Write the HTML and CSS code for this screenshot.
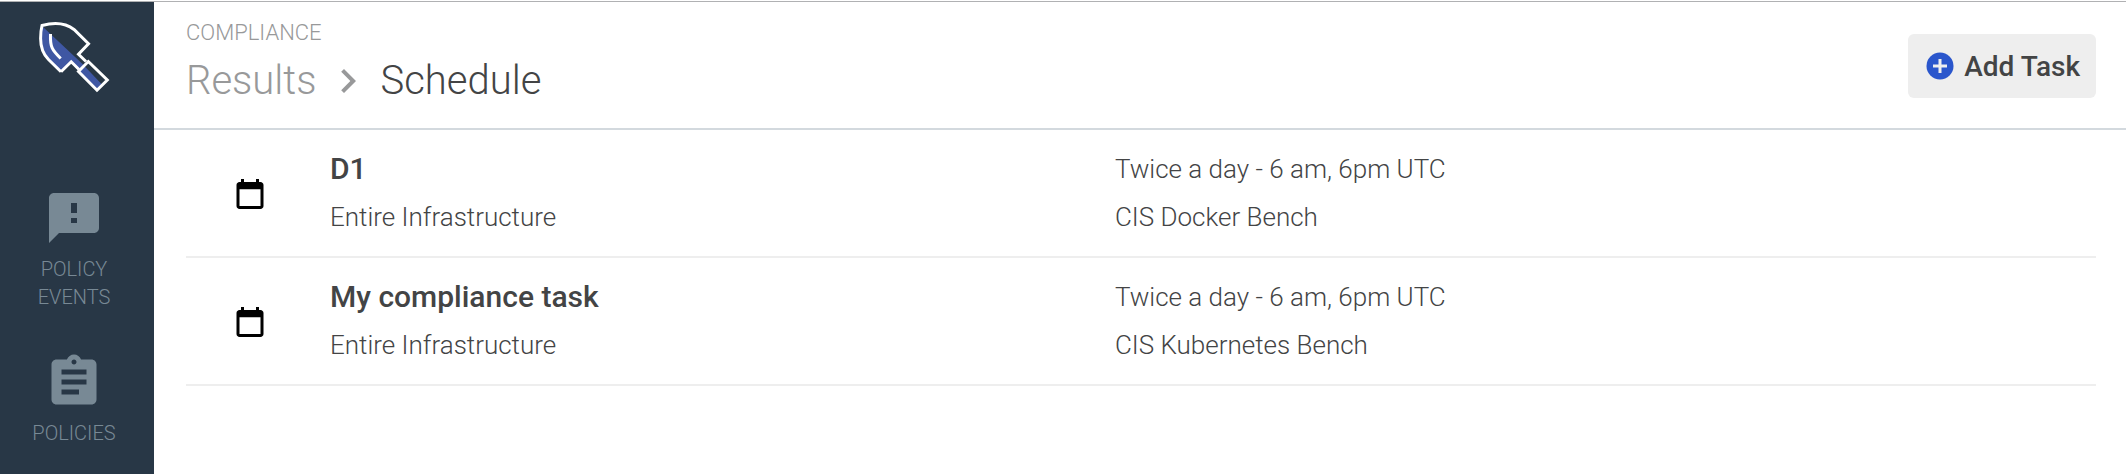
FILE: index.html
```html
<!DOCTYPE html>
<html lang="en">
<head>
<meta charset="utf-8">
<meta name="viewport" content="width=device-width, initial-scale=1">
<title>Schedule</title>
<link rel="stylesheet" href="styles.css">
</head>
<body>
<div class="app">
  <nav class="sidebar" aria-label="Main">
    <a class="logo" href="#" aria-label="Home">
      <svg class="logo-icon" viewBox="0 0 74 74" aria-hidden="true">
        <path class="logo-fill" d="M5 6L45 43.500L64.500 64L60 69L42 51L34 42L24 52L10 38Q3.500 31 3.600 18Z"/>
        <path class="logo-line" d="M24 51.800L11.500 39.500C5.500 33.500 3.600 27 3.600 18.500C3.600 14 4 9.500 5 5.500C17 2.300 28 2.500 37 9.500L51.500 23.700L41.500 34.200L49 41.500M24 51.800L34.200 41.800L42 49.500"/>
        <path class="logo-line" d="M51.300 41.500L70.300 60L60 70.200L41.500 51.500Z"/>
        <path class="logo-line" d="M13.500 14C13 27 15 30 23.700 38.500"/>
      </svg>
    </a>
    <a class="nav-item" href="#">
      <svg class="nav-icon" viewBox="0 0 24 24" aria-hidden="true"><path d="M20 2H4c-1.100 0-2 .9-2 2v18l4-4h14c1.100 0 2-.9 2-2V4c0-1.100-.9-2-2-2zm-6.800 12h-2.400v-2h2.400zm0-4h-2.400V6h2.400z"/></svg>
      <span class="nav-label">POLICY EVENTS</span>
    </a>
    <a class="nav-item" href="#">
      <svg class="nav-icon" viewBox="0 0 24 24" aria-hidden="true"><path d="M19 3h-4.180C14.400 1.840 13.300 1 12 1c-1.300 0-2.400.84-2.820 2H5c-1.100 0-2 .9-2 2v14c0 1.100.9 2 2 2h14c1.100 0 2-.9 2-2V5c0-1.100-.9-2-2-2zm-7 0c.55 0 1 .45 1 1s-.45 1-1 1-1-.45-1-1 .45-1 1-1zm2 14H7v-2h7v2zm3-4H7v-2h10v2zm0-4H7V7h10v2z"/></svg>
      <span class="nav-label">POLICIES</span>
    </a>
  </nav>
  <main class="main">
    <header class="header">
      <div class="heading">
        <div class="section">COMPLIANCE</div>
        <div class="crumbs">
          <a class="crumb-link" href="#">Results</a>
          <svg class="crumb-icon" viewBox="0 0 24 24" aria-hidden="true"><path d="M10 6L8.590 7.410 13.170 12l-4.580 4.590L10 18l6-6z"/></svg>
          <h1 class="crumb-current">Schedule</h1>
        </div>
      </div>
      <button class="add" type="button">
        <svg class="add-icon" viewBox="0 0 28 28" aria-hidden="true"><circle cx="14" cy="14" r="13.500"/><path d="M14 7v14M7 14h14"/></svg>
        Add Task
      </button>
    </header>
    <ul class="tasks">
      <li class="task">
        <svg class="task-icon" viewBox="0 0 24 24" aria-hidden="true"><path d="M19 4h-1V2h-2v2H8V2H6v2H5c-1.100 0-2 .9-2 2v14c0 1.100.9 2 2 2h14c1.100 0 2-.9 2-2V6c0-1.100-.9-2-2-2zm0 16H5V8.800h14z"/></svg>
        <div class="task-col">
          <h2 class="task-name">D1</h2>
          <div class="task-text">Entire Infrastructure</div>
        </div>
        <div class="task-col">
          <div class="task-text">Twice a day - 6 am, 6pm UTC</div>
          <div class="task-text">CIS Docker Bench</div>
        </div>
      </li>
      <li class="task">
        <svg class="task-icon" viewBox="0 0 24 24" aria-hidden="true"><path d="M19 4h-1V2h-2v2H8V2H6v2H5c-1.100 0-2 .9-2 2v14c0 1.100.9 2 2 2h14c1.100 0 2-.9 2-2V6c0-1.100-.9-2-2-2zm0 16H5V8.800h14z"/></svg>
        <div class="task-col">
          <h2 class="task-name">My compliance task</h2>
          <div class="task-text">Entire Infrastructure</div>
        </div>
        <div class="task-col">
          <div class="task-text">Twice a day - 6 am, 6pm UTC</div>
          <div class="task-text">CIS Kubernetes Bench</div>
        </div>
      </li>
    </ul>
  </main>
</div>
</body>
</html>
```

FILE: styles.css
```css
* {
  box-sizing: border-box;
}

body {
  margin: 0;
  padding-top: 1px;
  background: #fff;
  color: #434445;
  font-family: Roboto, "Liberation Sans", sans-serif;
  font-weight: 300;
}

a {
  color: inherit;
  text-decoration: none;
}

h1,
h2 {
  margin: 0;
}

.app {
  display: flex;
  min-height: calc(100vh - 1px);
  border-top: 1px solid #b0b1b3;
}

.sidebar {
  display: flex;
  flex: none;
  flex-direction: column;
  align-items: center;
  gap: 41px;
  width: 154px;
  padding: 18px 6px 0 0;
  background: #283746;
  color: #788995;
}

.logo {
  height: 127px;
}

.logo-icon {
  display: block;
  width: 74px;
  height: 74px;
}

.logo-fill {
  fill: #3f57a3;
}

.logo-line {
  fill: none;
  stroke: #fff;
  stroke-width: 3;
}

.nav-item {
  display: flex;
  flex-direction: column;
  align-items: center;
  gap: 7px;
}

.nav-icon {
  width: 60px;
  height: 60px;
  fill: currentColor;
}

.nav-label {
  max-width: 100px;
  font-size: 20px;
  line-height: 28px;
  text-align: center;
}

.main {
  flex: 1;
  min-width: 0;
}

.header {
  display: flex;
  align-items: center;
  justify-content: space-between;
  padding: 16px 30px 14px 32px;
  border-bottom: 2px solid #d3d9de;
}

.section {
  color: #98999a;
  font-size: 22px;
  line-height: 30px;
}

.crumbs {
  display: flex;
  align-items: center;
  gap: 8px;
  font-size: 40px;
  line-height: 66px;
}

.crumb-link {
  color: #98999a;
}

.crumb-icon {
  width: 48px;
  height: 48px;
  fill: #98999a;
}

.crumb-current {
  font: inherit;
}

.add {
  display: flex;
  align-items: center;
  gap: 10px;
  height: 64px;
  padding: 0 16px 0 18px;
  border: 0;
  border-radius: 6px;
  background: #eee;
  color: #434445;
  font: 500 28px Roboto, "Liberation Sans", sans-serif;
}

.add-icon {
  width: 28px;
  height: 28px;
  fill: #2a56cc;
  stroke: #eee;
  stroke-width: 3;
}

.add-icon circle {
  stroke: none;
}

.tasks {
  margin: 0 30px 0 32px;
  padding: 0;
  list-style: none;
}

.task {
  display: grid;
  grid-template-columns: 144px 4fr 5fr;
  align-items: center;
  padding: 15px 0;
  border-bottom: 2px solid #eee;
}

.task-icon {
  width: 36px;
  height: 36px;
  margin: 2px 0 0 46px;
}

.task-name {
  font-size: 30px;
  font-weight: 500;
  line-height: 48px;
}

.task-text {
  font-size: 26px;
  line-height: 48px;
}
```
